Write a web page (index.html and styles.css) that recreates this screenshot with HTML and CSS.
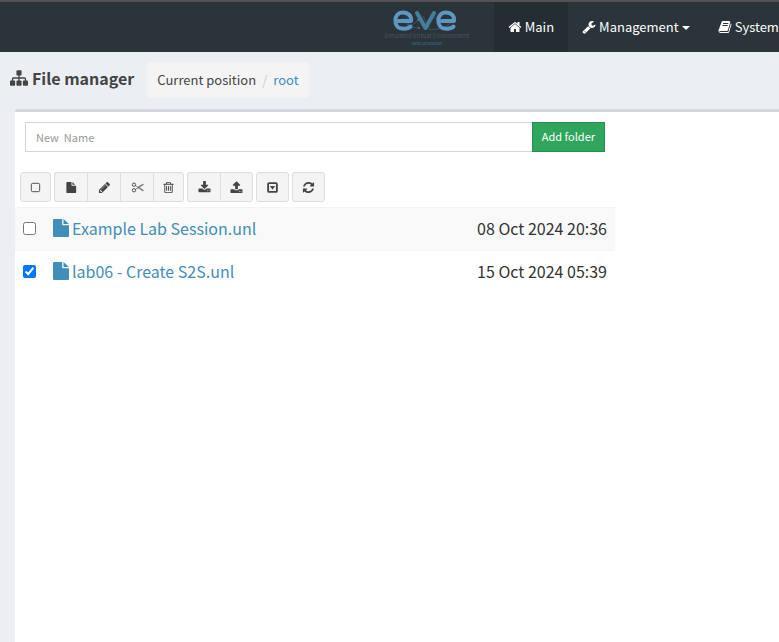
FILE: index.html
```html
<!DOCTYPE html>
<html lang="en">
<head>
<meta charset="utf-8">
<title>File manager</title>
<link rel="stylesheet" href="styles.css">
</head>
<body>
<header class="topbar">
  <a class="brand" href="#" aria-label="EVE home">
    <svg class="logo" viewBox="0 0 90 38" role="img" aria-label="EVE">
      <g fill="none" stroke="#356478" stroke-width="0.700">
        <path d="M21 9l6 10 10-7M28 19l9 1M41 8l7 14 14-2 8-6M53 9l8 12M24 6l4 14"/>
      </g>
      <g fill="#3f7891"><circle cx="36" cy="12" r="1"/><circle cx="28" cy="20" r="1.200"/><circle cx="37" cy="20" r="1"/><circle cx="58" cy="19" r="1.200"/></g>
      <g fill="none" stroke="#5f97c1" stroke-width="4" stroke-linecap="round" stroke-linejoin="round">
        <path d="M16 13H29C30 7 25 4.500 21 4.500C11 4.500 11 20 20 20.500C24 21 27 20 28.500 18.500"/>
        <path d="M60 13H72C73 7 68 4.500 64 4.500C54 4.500 54 20 63 20.500C67 21 70 20 71.500 18.500"/>
        <path stroke="#437f9c" d="M35 5L43.500 20L52 5"/>
      </g>
      <text class="logo-name" x="45" y="30" text-anchor="middle">Emulated Virtual Environment</text>
      <text class="logo-edition" x="45" y="37" text-anchor="middle">Next Generation</text>
    </svg>
  </a>
  <nav class="menu">
    <a class="menu-item active" href="#"><svg class="icon" viewBox="0 0 1792 1792"><path d="M1472 992v480q0 26-19 45t-45 19h-384v-384h-256v384h-384q-26 0-45-19t-19-45v-480q0-1 .5-3t.5-3l575-474 575 474q1 2 1 6zm223-69l-62 74q-8 9-21 11h-3q-13 0-21-7l-692-577-692 577q-12 8-24 7-13-2-21-11l-62-74q-8-10-7-23.500t11-21.500l719-599q32-26 76-26t76 26l244 204v-195q0-14 9-23t23-9h192q14 0 23 9t9 23v408l219 182q10 8 11 21.500t-7 23.500z"/></svg>Main</a>
    <a class="menu-item" href="#"><svg class="icon" viewBox="0 0 1792 1792"><path d="M448 1472q0-26-19-45t-45-19-45 19-19 45 19 45 45 19 45-19 19-45zm644-420l-682 682q-37 37-90 37-52 0-91-37l-106-108q-38-36-38-90 0-53 38-91l681-681q39 98 114.500 173.500t173.500 114.500zm634-435q0 39-23 106-47 134-164.500 217.500t-258.500 83.500q-185 0-316.500-131.500t-131.500-316.500 131.500-316.500 316.500-131.500q58 0 121.500 16.500t107.500 46.500q16 11 16 28t-16 28l-293 169v224l193 107q5-3 79-48.500t135.500-81 70.500-35.500q15 0 23.500 10t8.500 25z"/></svg>Management<span class="caret"></span></a>
    <a class="menu-item" href="#"><svg class="icon" viewBox="0 0 1792 1792"><path d="M1703 478q40 57 18 129l-275 906q-19 64-76.500 107.500t-122.500 43.500h-923q-77 0-148.500-53.500t-99.500-131.500q-24-67-2-127 0-4 3-27t4-37q1-8-3-21.500t-3-19.500q2-11 8-21t16.500-23.500 16.500-23.500q23-38 45-91.500t30-91.500q3-10 .5-30t-.5-28q3-11 17-28t17-23q21-36 42-92t25-90q1-9-2.500-32t.5-28q4-13 22-30.500t22-22.500q19-26 42.500-84.500t27.500-96.500q1-8-3-25.500t-2-26.500q2-8 9-18t18-23 17-21q8-12 16.500-30.500t15-35 16-36 19.500-32 26.500-23.500 36-11.500 47.500 5.500l-1 3q38-9 51-9h761q74 0 114 56t18 130l-274 906q-36 119-71.500 153.500t-128.500 34.500h-869q-27 0-38 15-11 16-1 43 24 70 144 70h923q29 0 56-15.500t35-41.500l300-987q7-22 5-57 38 15 59 43zm-1064 2q-4 13 2 22.500t20 9.500h608q13 0 25.500-9.500t16.500-22.500l21-64q4-13-2-22.500t-20-9.500h-608q-13 0-25.500 9.500t-16.500 22.500zm-83 256q-4 13 2 22.500t20 9.500h608q13 0 25.500-9.500t16.500-22.500l21-64q4-13-2-22.500t-20-9.500h-608q-13 0-25.500 9.500t-16.500 22.500z"/></svg>System</a>
  </nav>
</header>
<section class="page-head">
  <h1><svg class="icon-title" viewBox="0 0 1792 1792"><path d="M1792 1248v320q0 40-28 68t-68 28h-320q-40 0-68-28t-28-68v-320q0-40 28-68t68-28h96v-192h-512v192h96q40 0 68 28t28 68v320q0 40-28 68t-68 28h-320q-40 0-68-28t-28-68v-320q0-40 28-68t68-28h96v-192h-512v192h96q40 0 68 28t28 68v320q0 40-28 68t-68 28h-320q-40 0-68-28t-28-68v-320q0-40 28-68t68-28h96v-192q0-52 38-90t90-38h512v-192h-96q-40 0-68-28t-28-68v-320q0-40 28-68t68-28h320q40 0 68 28t28 68v320q0 40-28 68t-68 28h-96v192h512q52 0 90 38t38 90v192h96q40 0 68 28t28 68z"/></svg>File manager</h1>
  <nav class="breadcrumb" aria-label="Current position"><span>Current position</span><span class="slash">/</span><a href="#">root</a></nav>
</section>
<main class="box">
  <div class="files">
    <form class="add-folder">
      <input type="text" placeholder="New  Name" aria-label="New folder name">
      <button type="button">Add folder</button>
    </form>
    <div class="toolbar">
      <div class="group">
        <button class="narrow" type="button" aria-label="Select all"><svg viewBox="0 0 14 14"><rect class="line" x="2.500" y="2.500" width="9" height="9" rx="1.500"/></svg></button>
      </div>
      <div class="group">
        <button type="button" aria-label="New lab"><svg viewBox="0 0 1792 1792"><path d="M1024 512v-376q22 14 36 28l312 312q14 14 28 36zm-128 32q0 40 28 68t68 28h544v928q0 40-28 68t-68 28h-1152q-40 0-68-28t-28-68v-1344q0-40 28-68t68-28h608z"/></svg></button>
        <button type="button" aria-label="Rename"><svg viewBox="0 0 1792 1792"><path d="M491 1536l91-91-235-235-91 91v107h128v128h107zm523-928q0-22-22-22-10 0-17 7l-542 542q-7 7-7 17 0 22 22 22 10 0 17-7l542-542q7-7 7-17zm-54-192l416 416-832 832h-416v-416zm683 96q0 53-37 90l-166 166-416-416 166-165q36-38 90-38 53 0 91 38l235 234q37 39 37 91z"/></svg></button>
        <button type="button" aria-label="Cut"><svg viewBox="0 0 14 14"><g class="line"><circle cx="3.200" cy="4" r="1.800"/><circle cx="3.200" cy="10" r="1.800"/></g><path class="thin" d="M4.800 5L7.500 6.700L12.700 3.300L13.300 4L4.800 9M7.500 7.300L12.700 10.700L13.300 10L8.500 6.700"/></svg></button>
        <button class="narrow" type="button" aria-label="Delete"><svg viewBox="0 0 1792 1792"><path d="M704 736v576q0 14-9 23t-23 9h-64q-14 0-23-9t-9-23v-576q0-14 9-23t23-9h64q14 0 23 9t9 23zm256 0v576q0 14-9 23t-23 9h-64q-14 0-23-9t-9-23v-576q0-14 9-23t23-9h64q14 0 23 9t9 23zm256 0v576q0 14-9 23t-23 9h-64q-14 0-23-9t-9-23v-576q0-14 9-23t23-9h64q14 0 23 9t9 23zm128 724v-948h-896v948q0 22 7 40.500t14.500 27 10.500 8.500h832q3 0 10.500-8.500t14.500-27 7-40.500zm-672-1076h448l-48-117q-7-9-17-11h-317q-10 2-17 11zm928 32v64q0 14-9 23t-23 9h-96v948q0 83-47 143.500t-113 60.500h-832q-66 0-113-58.500t-47-141.500v-952h-96q-14 0-23-9t-9-23v-64q0-14 9-23t23-9h309l70-167q15-37 54-63t79-26h320q40 0 79 26t54 63l70 167h309q14 0 23 9t9 23z"/></svg></button>
      </div>
      <div class="group">
        <button type="button" aria-label="Import"><svg viewBox="0 0 1792 1792"><path d="M1344 1344q0-26-19-45t-45-19-45 19-19 45 19 45 45 19 45-19 19-45zm256 0q0-26-19-45t-45-19-45 19-19 45 19 45 45 19 45-19 19-45zm128-224v320q0 40-28 68t-68 28h-1472q-40 0-68-28t-28-68v-320q0-40 28-68t68-28h465l135 136q58 56 136 56t136-56l136-136h464q40 0 68 28t28 68zm-325-569q17 41-14 70l-448 448q-18 19-45 19t-45-19l-448-448q-31-29-14-70 17-39 59-39h256v-448q0-26 19-45t45-19h256q26 0 45 19t19 45v448h256q42 0 59 39z"/></svg></button>
        <button type="button" aria-label="Export"><svg viewBox="0 0 1792 1792"><path d="M1344 1472q0-26-19-45t-45-19-45 19-19 45 19 45 45 19 45-19 19-45zm256 0q0-26-19-45t-45-19-45 19-19 45 19 45 45 19 45-19 19-45zm128-224v320q0 40-28 68t-68 28h-1472q-40 0-68-28t-28-68v-320q0-40 28-68t68-28h427q21 56 70.500 92t110.500 36h256q61 0 110.500-36t70.500-92h427q40 0 68 28t28 68zm-325-648q-17 40-59 40h-256v448q0 26-19 45t-45 19h-256q-26 0-45-19t-19-45v-448h-256q-42 0-59-40-17-39 14-69l448-448q18-19 45-19t45 19l448 448q31 30 14 69z"/></svg></button>
      </div>
      <div class="group">
        <button type="button" aria-label="More actions"><svg viewBox="0 0 14 14"><rect class="heavy" x="2.300" y="2.300" width="9.400" height="9.400" rx="1"/><path d="M4.200 5.500H9.800L7 9.300z"/></svg></button>
      </div>
      <div class="group">
        <button type="button" aria-label="Refresh"><svg viewBox="0 0 1792 1792"><path d="M1639 1056q0 5-1 7-64 268-268 434.500t-478 166.500q-146 0-282.500-55t-243.500-157l-129 129q-19 19-45 19t-45-19-19-45v-448q0-26 19-45t45-19h448q26 0 45 19t19 45-19 45l-137 137q71 66 161 102t187 36q134 0 250-65t186-179q11-17 53-117 8-23 30-23h192q13 0 22.500 9.500t9.500 22.500zm25-800v448q0 26-19 45t-45 19h-448q-26 0-45-19t-19-45 19-45l138-138q-148-137-349-137-134 0-250 65t-186 179q-11 17-53 117-8 23-30 23h-199q-13 0-22.500-9.500t-9.500-22.500v-7q65-268 270-434.500t480-166.500q146 0 284 55.500t245 156.500l130-129q19-19 45-19t45 19 19 45z"/></svg></button>
      </div>
    </div>
    <table class="list">
      <tbody>
        <tr>
          <td class="pick"><input type="checkbox" aria-label="Select Example Lab Session.unl"></td>
          <td><a class="file" href="#"><svg viewBox="0 0 16 18"><path d="M10.500 5V0L16 5zM9.200 0V5.300Q9.200 6.300 10.200 6.300H16V17Q16 18 15 18H1Q0 18 0 17V1Q0 0 1 0z"/></svg>Example Lab Session.unl</a></td>
          <td class="date">08 Oct 2024 20:36</td>
        </tr>
        <tr>
          <td class="pick"><input type="checkbox" checked aria-label="Select lab06 - Create S2S.unl"></td>
          <td><a class="file" href="#"><svg viewBox="0 0 16 18"><path d="M10.500 5V0L16 5zM9.200 0V5.300Q9.200 6.300 10.200 6.300H16V17Q16 18 15 18H1Q0 18 0 17V1Q0 0 1 0z"/></svg>lab06 - Create S2S.unl</a></td>
          <td class="date">15 Oct 2024 05:39</td>
        </tr>
      </tbody>
    </table>
  </div>
</main>
</body>
</html>
```
FILE: styles.css
```css
* { box-sizing: border-box; }
body {
  margin: 0;
  min-height: 100vh;
  display: flex;
  flex-direction: column;
  overflow-x: hidden;
  background: #ebeff4;
  color: #333;
  font: 13px/20px "Noto Sans CJK SC", "Open Sans", sans-serif;
}
a { color: #438dbb; text-decoration: none; }
svg { display: block; flex: none; fill: currentColor; }
button, input { font: inherit; margin: 0; }

.topbar {
  display: flex;
  height: 52px;
  padding-left: 49%;
  border-top: 2px solid #555152;
  background: #2a343a;
  overflow: hidden;
}
.brand { flex: none; padding: 6px 22px 0 0; }
.logo { width: 90px; height: 38px; }
.logo-name { font-size: 6px; fill: #4b535b; }
.logo-edition { font-size: 4px; fill: #3b7594; }
.menu { display: flex; flex: none; }
.menu-item {
  display: flex;
  align-items: center;
  gap: 3px;
  padding: 0 14px;
  color: #fff;
  white-space: nowrap;
}
.menu-item.active { background: #232d32; }
.icon { width: 14px; height: 14px; }
.caret {
  margin-top: 2px;
  border: 4px solid transparent;
  border-top-color: currentColor;
  border-bottom: 0;
}

.page-head {
  display: flex;
  align-items: flex-start;
  gap: 13px;
  padding: 10px 10px 11px;
}
h1 {
  display: flex;
  align-items: center;
  gap: 4px;
  margin: 0;
  padding-top: 4px;
  font-size: 16px;
  line-height: 24px;
  color: #444;
}
.icon-title { width: 18px; height: 18px; }
.breadcrumb {
  display: flex;
  gap: 6px;
  padding: 8px 10px;
  border-radius: 3px;
  background: #f4f4f5;
  color: #444;
}
.slash { color: #ccc; }

.box {
  flex: 1;
  margin-left: 15px;
  border-top: 3px solid #d2d6de;
  border-top-left-radius: 3px;
  background: #fff;
}
.files { max-width: 600px; }
.add-folder {
  display: flex;
  padding: 10px 10px 20px;
  font-size: 11px;
}
.add-folder input {
  flex: 1;
  min-width: 0;
  height: 30px;
  padding: 0 10px;
  border: 1px solid #d2d6de;
  border-right: 0;
  white-space: pre;
}
.add-folder input::placeholder { color: #999; opacity: 1; }
.add-folder button {
  height: 30px;
  padding: 0 9px 2px;
  border: 1px solid #278c51;
  background: #30a55c;
  color: #fff;
}
.toolbar { display: flex; gap: 3px; padding: 0 5px 5px; }
.group { display: flex; }
.group button {
  display: grid;
  place-items: center;
  width: 33px;
  height: 30px;
  padding: 0;
  border: 1px solid #ddd;
  border-right-width: 0;
  background: #f4f4f4;
  color: #444;
}
.group .narrow { width: 31px; }
.group button:first-child { border-radius: 3px 0 0 3px; }
.group button:last-child { border-right-width: 1px; border-radius: 0 3px 3px 0; }
.group button:only-child { border-radius: 3px; }
.group svg { width: 13px; height: 13px; }
.line, .heavy, .thin { fill: none; stroke: currentColor; }
.heavy { stroke-width: 2; }
.thin { stroke-width: 0.7px; }

.list {
  width: 100%;
  border-collapse: collapse;
  font-size: 16px;
  line-height: 24px;
}
.list td { padding: 8px 8px 10px; border-top: 1px solid #f4f4f4; }
.list tr:nth-child(odd) { background: #f9f9f9; }
.list .pick { width: 30px; }
.pick input { display: block; width: 13px; height: 13px; }
.file { display: flex; align-items: center; gap: 3px; }
.file svg { width: 16px; height: 18px; }
.list .date { text-align: right; white-space: nowrap; }
```
